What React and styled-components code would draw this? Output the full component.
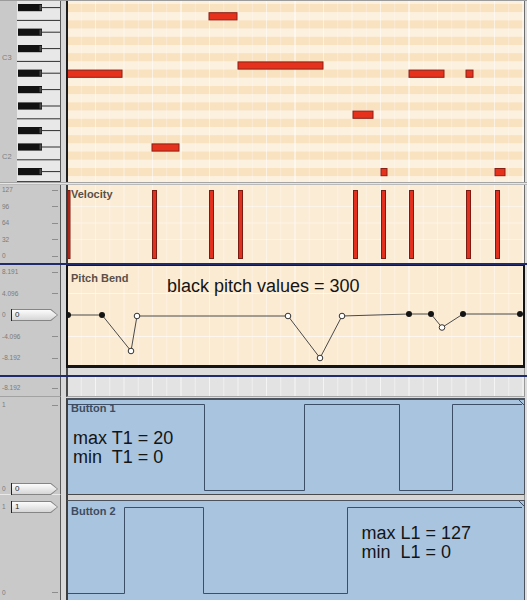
import React from 'react';
import styled, { createGlobalStyle } from 'styled-components';

const GlobalStyle = createGlobalStyle`
  html, body {
    margin: 0;
    padding: 0;
    background: #dcdcdc;
  }
  body {
    font-family: "Liberation Sans", Arial, sans-serif;
  }
`;

// plot geometry, in page pixels
const STEP = 14.25;
const ROW_H = 8.2;
const rowTop = (i) => 4 + ROW_H * i;

const STRIPE_DARK = '#f8e2c0';
const STRIPE_LIGHT = '#fcf0de';

const Editor = styled.div`
  width: 527px;
  height: 600px;
  display: flex;
  flex-direction: column;
  overflow: hidden;
  background: #dcdcdc;
`;

const Row = styled.div`
  display: flex;
  flex: none;
  height: ${(p) => p.$h}px;
`;

const Rule = styled.div`
  flex: none;
  height: ${(p) => p.$h}px;
  box-sizing: border-box;
  background: ${(p) => p.$bg};
  border-top: ${(p) => p.$top || 'none'};
  border-bottom: ${(p) => p.$bottom || 'none'};
`;

const Gutter = styled.div`
  flex: none;
  width: 61px;
  box-sizing: border-box;
  background: #c9c9c9;
  border-right: 1px solid #595959;
  border-top: ${(p) => (p.$hilite ? '1px solid #e8e8e8' : 'none')};
  border-bottom: ${(p) => (p.$rule ? '1px solid #a2a2a2' : 'none')};
  display: flex;
  flex-direction: column;
  justify-content: space-between;
  padding: ${(p) => p.$pt || 0}px 0 ${(p) => p.$pb || 0}px;
`;

const Strip = styled.div`
  flex: none;
  width: 5px;
  background: #d8d8d8;
`;

const Panel = styled.div`
  position: relative;
  flex: 1;
  box-sizing: border-box;
  background: ${(p) => p.$bg};
  border-left: 2px solid ${(p) => p.$edge || '#2b2b2b'};
  border-right: ${(p) => p.$right || '1px solid #6d6d6d'};
  border-top: ${(p) => p.$top || 'none'};
  border-bottom: ${(p) => p.$bottom || 'none'};
  margin-top: ${(p) => p.$gap || 0}px;
  padding: ${(p) => p.$pad || '0'};
`;

const Trim = styled.div`
  flex: none;
  width: 2px;
  background: #dedede;
`;

const PlotSvg = styled.svg`
  position: absolute;
  inset: 0;
  display: block;
`;

const KeysSvg = styled.svg`
  display: block;
`;

const ScaleRow = styled.div`
  display: flex;
  align-items: center;
  height: 8px;
  padding-left: 2px;
  font-size: 6.5px;
  line-height: 8px;
  color: #7b7b7b;
`;

const ScaleText = styled.span`
  flex: none;
  width: 9px;
  white-space: nowrap;
`;

const Tick = styled.span`
  margin-left: auto;
  margin-right: 2px;
  width: 6px;
  height: 1px;
  background: #8d8d8d;
`;

const TagFrame = styled.div`
  position: relative;
  z-index: 2;
  flex: none;
  width: 47px;
  height: 12px;
  box-sizing: border-box;
  padding: 1px 1px 1px 0;
  border-left: 1px solid #222;
  background: #858585;
  clip-path: polygon(0 0, calc(100% - 7px) 0, 100% 50%, calc(100% - 7px) 100%, 0 100%);
`;

const TagFace = styled.div`
  height: 100%;
  background: linear-gradient(#fcfcfc, #d6d6d6);
  clip-path: polygon(0 0, calc(100% - 6.5px) 0, 100% 50%, calc(100% - 6.5px) 100%, 0 100%);
  padding-left: 3px;
  font-size: 8px;
  line-height: 10px;
  color: #2b2b2b;
`;

const LaneTitle = styled.div`
  position: relative;
  font-size: 11px;
  font-weight: bold;
  line-height: 13px;
  color: ${(p) => p.$color || '#5a5048'};
`;

const PitchHeader = styled.div`
  position: relative;
  display: grid;
  grid-template-columns: 96px auto;
  align-items: start;
`;

const Caption = styled.div`
  position: relative;
  margin-top: ${(p) => p.$mt || 0}px;
  margin-left: ${(p) => p.$ml || 0}px;
  font-size: 18px;
  line-height: 19px;
  color: #141414;
  white-space: pre;
`;

function Scale({ label, tag }) {
  return (
    <ScaleRow>
      <ScaleText>{label}</ScaleText>
      {tag !== undefined ? (
        <TagFrame>
          <TagFace>{tag}</TagFace>
        </TagFrame>
      ) : (
        <Tick />
      )}
    </ScaleRow>
  );
}

function Plot({ top, width = 456, height, children }) {
  return (
    <PlotSvg width={width} height={height} viewBox={`68 ${top} ${width} ${height}`}>
      {children}
    </PlotSvg>
  );
}

function GridLines({ top, height, sub, beat, bar }) {
  const lines = [];
  for (let k = 1; 67 + k * STEP < 524; k++) {
    const x = 67 + k * STEP;
    const stroke = k % 8 === 0 ? bar : k % 2 === 0 ? beat : sub;
    lines.push(<line key={k} x1={x} x2={x} y1={top} y2={top + height} stroke={stroke} strokeWidth="1" />);
  }
  return <g>{lines}</g>;
}

const BLACK_KEYS = [0, 3, 5, 8, 10, 12, 15, 17, 20];
const OCTAVE_SPLITS = [2, 7, 14, 19];

function Keyboard() {
  return (
    <KeysSvg width="60" height="181" viewBox="0 1 60 181">
      <rect x="0" y="1" width="17" height="181" fill="#c9c9c9" />
      <rect x="17" y="1" width="43" height="181" fill="#e8e8e8" />
      {OCTAVE_SPLITS.map((i) => (
        <line key={i} x1="17" x2="60" y1={rowTop(i)} y2={rowTop(i)} stroke="#2e2e2e" />
      ))}
      {BLACK_KEYS.map((i) => (
        <g key={i}>
          <line x1="42" x2="60" y1={rowTop(i) + 3.6} y2={rowTop(i) + 3.6} stroke="#2e2e2e" />
          <rect x="18" y={rowTop(i)} width="24" height="7.2" fill="#121212" />
          <rect x="39.5" y={rowTop(i) + 1} width="2" height="5.2" fill="#4a4a4a" />
        </g>
      ))}
      <line x1="17" x2="60" y1="181.5" y2="181.5" stroke="#444" />
      <text x="2" y="60" fontSize="7.5" fill="#808080" fontFamily="Liberation Sans, Arial, sans-serif">C3</text>
      <text x="2" y="159" fontSize="7.5" fill="#808080" fontFamily="Liberation Sans, Arial, sans-serif">C2</text>
    </KeysSvg>
  );
}

const NOTES = [
  { x1: 67, x2: 122, row: 8 },
  { x1: 209, x2: 237, row: 1 },
  { x1: 238, x2: 323, row: 7 },
  { x1: 409, x2: 444, row: 8 },
  { x1: 466, x2: 473, row: 8 },
  { x1: 353, x2: 373, row: 13 },
  { x1: 152, x2: 179, row: 17 },
  { x1: 381, x2: 387, row: 20 },
  { x1: 495, x2: 505, row: 20 },
];

function PianoRoll() {
  const stripes = [];
  for (let i = -1; i <= 21; i++) {
    stripes.push(
      <rect key={i} x="68" y={rowTop(i)} width="456" height={ROW_H} fill={i % 2 === 0 ? STRIPE_DARK : STRIPE_LIGHT} />
    );
  }
  return (
    <Plot top={1} height={181}>
      {stripes}
      <GridLines top={1} height={181} sub="rgba(255,255,255,0.35)" beat="rgba(255,255,255,0.55)" bar="#ffffff" />
      {NOTES.map((n, k) => (
        <rect
          key={k}
          x={n.x1}
          y={rowTop(n.row) + 0.5}
          width={n.x2 - n.x1}
          height="7.2"
          fill="#e6311d"
          stroke="#8a1f14"
          strokeWidth="1"
        />
      ))}
    </Plot>
  );
}

const VELOCITY_BARS = [152, 209, 238, 353, 381, 409, 466, 495];

function VelocityLane() {
  return (
    <Plot top={185} height={78}>
      <GridLines top={185} height={78} sub="rgba(255,255,255,0.3)" beat="rgba(255,255,255,0.45)" bar="rgba(255,255,255,0.8)" />
      {[206.5, 223, 239.5].map((y) => (
        <line key={y} x1="68" x2="524" y1={y} y2={y} stroke="rgba(255,255,255,0.45)" />
      ))}
      <rect x="68" y="190.5" width="2" height="68" fill="#e3301e" stroke="#7a1c12" strokeWidth="1" />
      {VELOCITY_BARS.map((x) => (
        <rect key={x} x={x + 0.5} y="190.5" width="4" height="68" fill="#e3301e" stroke="#7a1c12" strokeWidth="1" />
      ))}
    </Plot>
  );
}

const BEND = [
  { x: 68, y: 315, on: true },
  { x: 102, y: 315, on: true },
  { x: 131, y: 351 },
  { x: 137, y: 316 },
  { x: 288, y: 316 },
  { x: 320, y: 358 },
  { x: 342, y: 316 },
  { x: 409, y: 314, on: true },
  { x: 431, y: 314, on: true },
  { x: 442, y: 327.5 },
  { x: 463, y: 314, on: true },
  { x: 520, y: 314, on: true },
];

function PitchLane() {
  return (
    <Plot top={266} width={455} height={99}>
      <GridLines top={266} height={99} sub="rgba(255,255,255,0.3)" beat="rgba(255,255,255,0.45)" bar="rgba(255,255,255,0.8)" />
      {[293.5, 336.5].map((y) => (
        <line key={y} x1="68" x2="523" y1={y} y2={y} stroke="rgba(255,255,255,0.6)" />
      ))}
      <polyline points={BEND.map((p) => `${p.x},${p.y}`).join(' ')} fill="none" stroke="#4a4a4a" strokeWidth="1" />
      {BEND.map((p, k) =>
        p.on ? (
          <circle key={k} cx={p.x} cy={p.y} r="3" fill="#141414" />
        ) : (
          <circle key={k} cx={p.x} cy={p.y} r="2.8" fill="#ffffff" stroke="#333" strokeWidth="1" />
        )
      )}
    </Plot>
  );
}

function SquareWave({ top, height, points }) {
  return (
    <Plot top={top} height={height}>
      <polyline points={points} fill="none" stroke="#3d4f66" strokeWidth="1" />
      <line x1="519" y1={top} x2="524" y2={top + 5} stroke="#3d4f66" strokeWidth="1" />
    </Plot>
  );
}

export default function App() {
  return (
    <Editor>
      <GlobalStyle />
      <Rule $h={1} $bg="#9b9b9b" />

      <Row $h={181}>
        <Gutter>
          <Keyboard />
        </Gutter>
        <Strip />
        <Panel $bg={STRIPE_LIGHT} $edge="#1c1c1c">
          <PianoRoll />
        </Panel>
        <Trim />
      </Row>

      <Rule $h={3} $bg="#e6e6e6" $top="1px solid #a5a5a5" $bottom="1px solid #bababa" />

      <Row $h={78}>
        <Gutter $pt={1} $pb={3}>
          <Scale label="127" />
          <Scale label="96" />
          <Scale label="64" />
          <Scale label="32" />
          <Scale label="0" />
        </Gutter>
        <Strip />
        <Panel $bg="#fbecd6" $edge="#3a3a3a" $pad="3px 0 0 3px">
          <VelocityLane />
          <LaneTitle>Velocity</LaneTitle>
        </Panel>
        <Trim />
      </Row>

      <Rule $h={2} $bg="#1f2b6c" />

      <Row $h={103}>
        <Gutter $pt={3} $pb={6}>
          <Scale label="8.191" />
          <Scale label="4.096" />
          <Scale label="0" tag="0" />
          <Scale label="-4.096" />
          <Scale label="-8.192" />
        </Gutter>
        <Strip />
        <Panel
          $bg="#fbebd3"
          $edge="#141414"
          $right="2px solid #141414"
          $top="1px solid #1a1a1a"
          $bottom="3px solid #141414"
          $pad="5.5px 0 0 3px"
        >
          <PitchLane />
          <PitchHeader>
            <LaneTitle>Pitch Bend</LaneTitle>
            <Caption $mt={5.5}>black pitch values = 300</Caption>
          </PitchHeader>
        </Panel>
        <Trim />
      </Row>

      <Row $h={7}>
        <Gutter />
        <Strip />
        <Panel $bg="#dcdcdc" $edge="#4a4a4a" $right="1px solid #9a9a9a" />
        <Trim />
      </Row>

      <Rule $h={2} $bg="#1f2b6c" />

      <Row $h={20}>
        <Gutter $pt={7} $rule>
          <Scale label="-8.192" />
        </Gutter>
        <Strip />
        <Panel $bg="#e3e3e3" $edge="#4a4a4a" $right="1px solid #9a9a9a" $bottom="1px solid #a4a4a4">
          <Plot top={377} height={19}>
            <GridLines top={377} height={19} sub="rgba(255,255,255,0.45)" beat="rgba(255,255,255,0.6)" bar="#f7f7f7" />
          </Plot>
        </Panel>
        <Trim />
      </Row>

      <Row $h={97}>
        <Gutter $pt={4} $pb={1}>
          <Scale label="1" />
          <Scale label="0" tag="0" />
        </Gutter>
        <Strip />
        <Panel $bg="#a9c4de" $edge="#3e3e3e" $gap={1} $top="2px solid #4c535c" $right="1px solid #4c535c" $pad="2px 0 0 3px">
          <SquareWave
            top={400}
            height={94}
            points="68,404.5 204.5,404.5 204.5,490.5 304.5,490.5 304.5,404.5 399.5,404.5 399.5,490.5 452.5,490.5 452.5,404.5 522,404.5"
          />
          <LaneTitle $color="#3e4c5f">Button 1</LaneTitle>
          <Caption $mt={13.5} $ml={2}>{'max T1 = 20\nmin  T1 = 0'}</Caption>
        </Panel>
        <Trim />
      </Row>

      <Row $h={6}>
        <Gutter $hilite />
        <Strip />
        <Panel $bg="#d6d6d6" $edge="#3e3e3e" $top="1px solid #4a4a4a" $right="1px solid #8a8a8a" />
        <Trim />
      </Row>

      <Row $h={100}>
        <Gutter $pt={3} $pb={3.5}>
          <Scale label="1" tag="1" />
          <Scale label="0" />
        </Gutter>
        <Strip />
        <Panel $bg="#a9c4de" $edge="#3e3e3e" $top="1px solid #4c535c" $right="1px solid #4c535c" $pad="4px 0 0 3px">
          <SquareWave
            top={501}
            height={99}
            points="68,593.5 124.5,593.5 124.5,507.5 203.5,507.5 203.5,593.5 347.5,593.5 347.5,507.5 522,507.5"
          />
          <LaneTitle $color="#3e4c5f">Button 2</LaneTitle>
          <Caption $mt={6} $ml={290.5}>{'max L1 = 127\nmin  L1 = 0'}</Caption>
        </Panel>
        <Trim />
      </Row>
    </Editor>
  );
}
